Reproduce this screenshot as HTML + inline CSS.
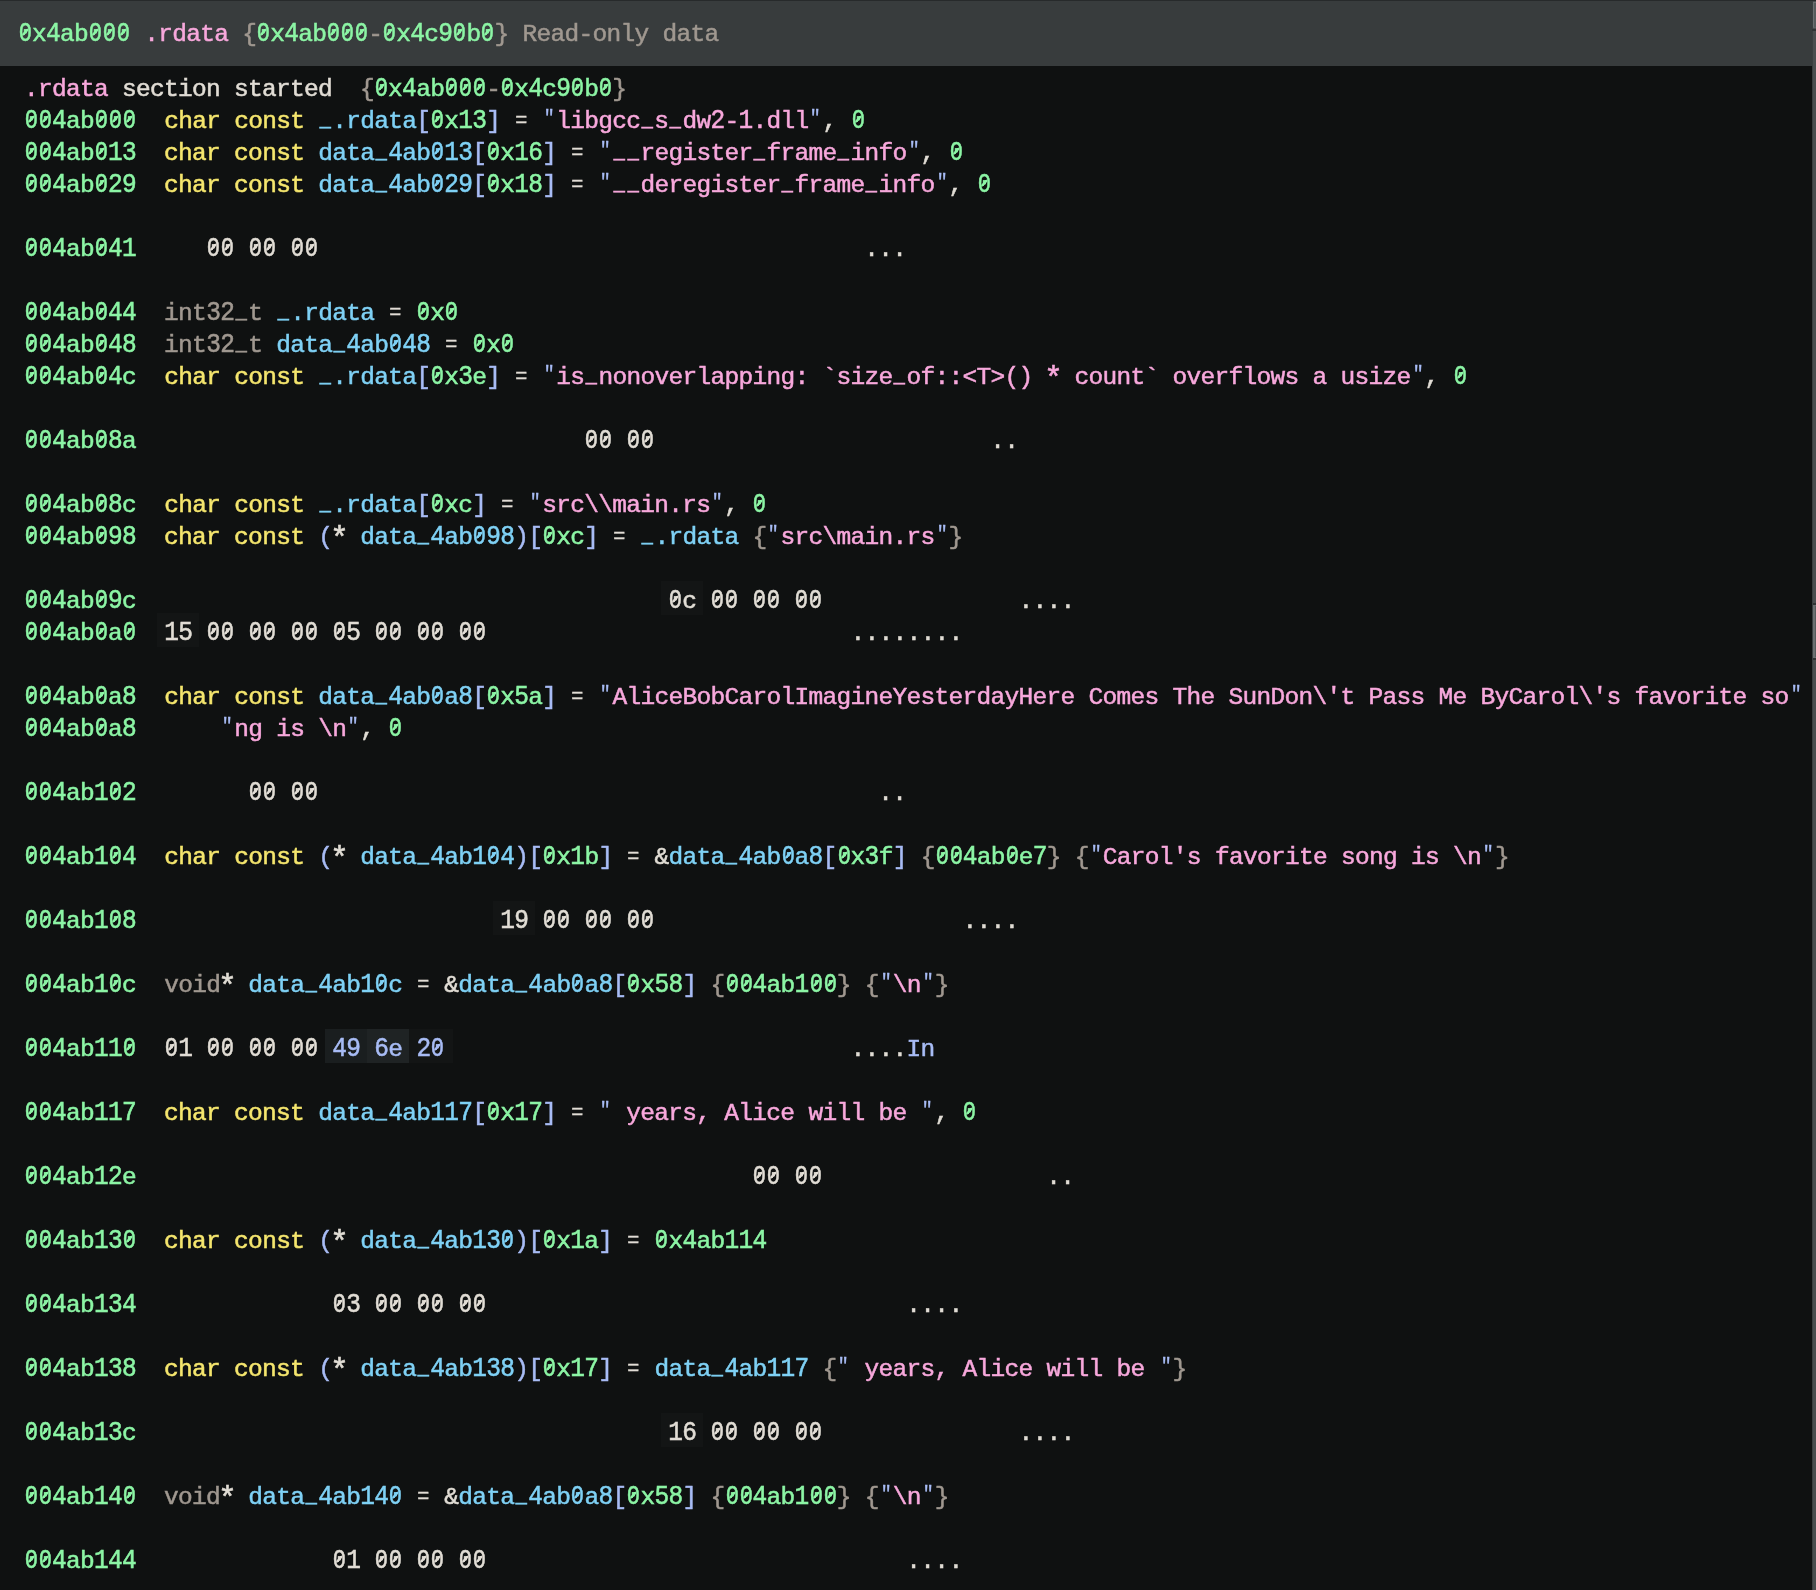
<!DOCTYPE html>
<html><head><meta charset="utf-8"><title>linear view</title><style>
html,body{margin:0;padding:0;background:#0f1111;}
body{width:1816px;height:1590px;overflow:hidden;position:relative;font-family:"Liberation Mono",monospace;font-size:24.5px;letter-spacing:-0.7px;color:#e1ddd5;-webkit-text-stroke:0.5px currentColor;font-kerning:none;font-variant-ligatures:none;}
#hdr{position:absolute;left:0;top:0;width:1812px;height:66px;background:#383c3d;}
#hdr .t{will-change:transform;position:absolute;left:18px;top:19px;height:32px;line-height:32px;white-space:pre;}
#sb{position:absolute;left:1812px;top:0;width:4px;height:1590px;background:#4a4e4f;border-left:1px solid #3b3f40;box-sizing:border-box;}
#sb .a{position:absolute;left:0;top:2px;width:3px;height:26px;background:#565b5c;border-left:1px solid #6b7071;border-top:1px solid #6b7071;border-bottom:1px solid #5d6263;box-sizing:border-box;}
#sb .s{position:absolute;left:-1px;top:29px;width:4px;height:2px;background:#2f3334;}
#sb .th{position:absolute;left:0;top:605px;width:3px;height:53px;background:#565b5c;border-left:2px solid #6b7071;border-top:1px solid #6b7071;border-bottom:1px solid #6b7071;box-sizing:border-box;box-shadow:0 -2px 0 #2f3334,0 2px 0 #2f3334;}
#top{position:absolute;left:0;top:0;width:1816px;height:1px;background:#272a2b;}
#code{will-change:transform;position:absolute;left:24px;top:74px;}
.ln{height:32px;line-height:32px;white-space:pre;}
i{font-style:normal;display:inline-block;transform:scaleY(1.11);transform-origin:0 22.5px;}
b{font-weight:normal;display:inline-block;transform:scaleX(0.9);background:linear-gradient(to bottom right,transparent calc(50% - 1.5px),currentColor calc(50% - 0.9px),currentColor calc(50% + 0.9px),transparent calc(50% + 1.5px)) 4.0px 11.2px/6.7px 6.2px no-repeat;}
u{text-decoration:none;display:inline-block;transform:translateY(-2.5px) scale(0.78,1.0);}
s{text-decoration:none;display:inline-block;transform:translateY(2.5px) scale(1.25);}
em{font-style:normal;display:inline-block;transform:scale(0.82,0.9);}
.q{color:#a8bcf5;display:inline-block;transform:scale(0.74,0.8);transform-origin:50% 3.5px;}
.g{color:#8cf5a5}.p{color:#f8a8dc}.y{color:#f5e66e}.b{color:#7fd1f5}.l{color:#a8bcf5}.k{color:#a09890}
.hb{background:var(--bg);box-shadow:-7px 0 0 var(--bg),7px 0 0 var(--bg);padding:7px 0 0;}
.hl{box-shadow:-7px 0 0 var(--bg),9px 0 0 var(--bg);}
</style></head>
<body>
<div id="hdr"><div class="t"><span class="g"><i><b>0</b></i>x<i>4</i>ab<i><b>0</b><b>0</b><b>0</b></i></span> <span class="p">.rdata</span> <span class="k">{</span><span class="g"><i><b>0</b></i>x<i>4</i>ab<i><b>0</b><b>0</b><b>0</b></i></span><span class="k">-</span><span class="g"><i><b>0</b></i>x<i>4</i>c<i>9<b>0</b></i>b<i><b>0</b></i></span><span class="k">}</span> <span class="k">Read-only data</span></div></div>
<div id="sb"><div class="a"></div><div class="s"></div><div class="th"></div></div>
<div id="top"></div>
<div id="code">
<div class="ln"><span class="p">.rdata</span> section started  <span class="k">{</span><span class="g"><i><b>0</b></i>x<i>4</i>ab<i><b>0</b><b>0</b><b>0</b></i></span><span class="k">-</span><span class="g"><i><b>0</b></i>x<i>4</i>c<i>9<b>0</b></i>b<i><b>0</b></i></span><span class="k">}</span></div>
<div class="ln"><span class="g"><i><b>0</b><b>0</b>4</i>ab<i><b>0</b><b>0</b><b>0</b></i></span>  <span class="y">char const </span><span class="b"><u>_</u>.rdata</span><span class="l">[</span><span class="g"><i><b>0</b></i>x<i>13</i></span><span class="l">]</span> <em>=</em> <span class="q">"</span><span class="p">libgcc<u>_</u>s<u>_</u>dw<i>2</i>-<i>1</i>.dll</span><span class="q">"</span>, <span class="g"><i><b>0</b></i></span></div>
<div class="ln"><span class="g"><i><b>0</b><b>0</b>4</i>ab<i><b>0</b>13</i></span>  <span class="y">char const </span><span class="b">data<u>_</u><i>4</i>ab<i><b>0</b>13</i></span><span class="l">[</span><span class="g"><i><b>0</b></i>x<i>16</i></span><span class="l">]</span> <em>=</em> <span class="q">"</span><span class="p"><u>_</u><u>_</u>register<u>_</u>frame<u>_</u>info</span><span class="q">"</span>, <span class="g"><i><b>0</b></i></span></div>
<div class="ln"><span class="g"><i><b>0</b><b>0</b>4</i>ab<i><b>0</b>29</i></span>  <span class="y">char const </span><span class="b">data<u>_</u><i>4</i>ab<i><b>0</b>29</i></span><span class="l">[</span><span class="g"><i><b>0</b></i>x<i>18</i></span><span class="l">]</span> <em>=</em> <span class="q">"</span><span class="p"><u>_</u><u>_</u>deregister<u>_</u>frame<u>_</u>info</span><span class="q">"</span>, <span class="g"><i><b>0</b></i></span></div>
<div class="ln"></div>
<div class="ln"><span class="g"><i><b>0</b><b>0</b>4</i>ab<i><b>0</b>41</i></span>     <span class="w"><i><b>0</b><b>0</b></i></span> <span class="w"><i><b>0</b><b>0</b></i></span> <span class="w"><i><b>0</b><b>0</b></i></span>                                       ...</div>
<div class="ln"></div>
<div class="ln"><span class="g"><i><b>0</b><b>0</b>4</i>ab<i><b>0</b>44</i></span>  <span class="k">int<i>32</i><u>_</u>t </span><span class="b"><u>_</u>.rdata</span> <em>=</em> <span class="g"><i><b>0</b></i>x<i><b>0</b></i></span></div>
<div class="ln"><span class="g"><i><b>0</b><b>0</b>4</i>ab<i><b>0</b>48</i></span>  <span class="k">int<i>32</i><u>_</u>t </span><span class="b">data<u>_</u><i>4</i>ab<i><b>0</b>48</i></span> <em>=</em> <span class="g"><i><b>0</b></i>x<i><b>0</b></i></span></div>
<div class="ln"><span class="g"><i><b>0</b><b>0</b>4</i>ab<i><b>0</b>4</i>c</span>  <span class="y">char const </span><span class="b"><u>_</u>.rdata</span><span class="l">[</span><span class="g"><i><b>0</b></i>x<i>3</i>e</span><span class="l">]</span> <em>=</em> <span class="q">"</span><span class="p">is<u>_</u>nonoverlapping: `size<u>_</u>of::&lt;T&gt;() <s>*</s> count` overflows a usize</span><span class="q">"</span>, <span class="g"><i><b>0</b></i></span></div>
<div class="ln"></div>
<div class="ln"><span class="g"><i><b>0</b><b>0</b>4</i>ab<i><b>0</b>8</i>a</span>                                <span class="w"><i><b>0</b><b>0</b></i></span> <span class="w"><i><b>0</b><b>0</b></i></span>                        ..</div>
<div class="ln"></div>
<div class="ln"><span class="g"><i><b>0</b><b>0</b>4</i>ab<i><b>0</b>8</i>c</span>  <span class="y">char const </span><span class="b"><u>_</u>.rdata</span><span class="l">[</span><span class="g"><i><b>0</b></i>xc</span><span class="l">]</span> <em>=</em> <span class="q">"</span><span class="p">src\\main.rs</span><span class="q">"</span>, <span class="g"><i><b>0</b></i></span></div>
<div class="ln"><span class="g"><i><b>0</b><b>0</b>4</i>ab<i><b>0</b>98</i></span>  <span class="y">char const </span><span class="l">(</span><s>*</s> <span class="b">data<u>_</u><i>4</i>ab<i><b>0</b>98</i></span><span class="l">)[</span><span class="g"><i><b>0</b></i>xc</span><span class="l">]</span> <em>=</em> <span class="b"><u>_</u>.rdata</span> <span class="k">{</span><span class="q">"</span><span class="p">src\main.rs</span><span class="q">"</span><span class="k">}</span></div>
<div class="ln"></div>
<div class="ln"><span class="g"><i><b>0</b><b>0</b>4</i>ab<i><b>0</b>9</i>c</span>                                      <span class="w hb" style="--bg:#131515"><i><b>0</b></i>c</span> <span class="w"><i><b>0</b><b>0</b></i></span> <span class="w"><i><b>0</b><b>0</b></i></span> <span class="w"><i><b>0</b><b>0</b></i></span>              ....</div>
<div class="ln"><span class="g"><i><b>0</b><b>0</b>4</i>ab<i><b>0</b></i>a<i><b>0</b></i></span>  <span class="w hb" style="--bg:#131515"><i>15</i></span> <span class="w"><i><b>0</b><b>0</b></i></span> <span class="w"><i><b>0</b><b>0</b></i></span> <span class="w"><i><b>0</b><b>0</b></i></span> <span class="w"><i><b>0</b>5</i></span> <span class="w"><i><b>0</b><b>0</b></i></span> <span class="w"><i><b>0</b><b>0</b></i></span> <span class="w"><i><b>0</b><b>0</b></i></span>                          ........</div>
<div class="ln"></div>
<div class="ln"><span class="g"><i><b>0</b><b>0</b>4</i>ab<i><b>0</b></i>a<i>8</i></span>  <span class="y">char const </span><span class="b">data<u>_</u><i>4</i>ab<i><b>0</b></i>a<i>8</i></span><span class="l">[</span><span class="g"><i><b>0</b></i>x<i>5</i>a</span><span class="l">]</span> <em>=</em> <span class="q">"</span><span class="p">AliceBobCarolImagineYesterdayHere Comes The SunDon\'t Pass Me ByCarol\'s favorite so</span><span class="q">"</span></div>
<div class="ln"><span class="g"><i><b>0</b><b>0</b>4</i>ab<i><b>0</b></i>a<i>8</i></span>      <span class="q">"</span><span class="p">ng is \n</span><span class="q">"</span>, <span class="g"><i><b>0</b></i></span></div>
<div class="ln"></div>
<div class="ln"><span class="g"><i><b>0</b><b>0</b>4</i>ab<i>1<b>0</b>2</i></span>        <span class="w"><i><b>0</b><b>0</b></i></span> <span class="w"><i><b>0</b><b>0</b></i></span>                                        ..</div>
<div class="ln"></div>
<div class="ln"><span class="g"><i><b>0</b><b>0</b>4</i>ab<i>1<b>0</b>4</i></span>  <span class="y">char const </span><span class="l">(</span><s>*</s> <span class="b">data<u>_</u><i>4</i>ab<i>1<b>0</b>4</i></span><span class="l">)[</span><span class="g"><i><b>0</b></i>x<i>1</i>b</span><span class="l">]</span> <em>=</em> &amp;<span class="b">data<u>_</u><i>4</i>ab<i><b>0</b></i>a<i>8</i></span><span class="l">[</span><span class="g"><i><b>0</b></i>x<i>3</i>f</span><span class="l">]</span> <span class="k">{</span><span class="g"><i><b>0</b><b>0</b>4</i>ab<i><b>0</b></i>e<i>7</i></span><span class="k">}</span> <span class="k">{</span><span class="q">"</span><span class="p">Carol's favorite song is \n</span><span class="q">"</span><span class="k">}</span></div>
<div class="ln"></div>
<div class="ln"><span class="g"><i><b>0</b><b>0</b>4</i>ab<i>1<b>0</b>8</i></span>                          <span class="w hb" style="--bg:#131515"><i>19</i></span> <span class="w"><i><b>0</b><b>0</b></i></span> <span class="w"><i><b>0</b><b>0</b></i></span> <span class="w"><i><b>0</b><b>0</b></i></span>                      ....</div>
<div class="ln"></div>
<div class="ln"><span class="g"><i><b>0</b><b>0</b>4</i>ab<i>1<b>0</b></i>c</span>  <span class="k">void</span><s>*</s> <span class="b">data<u>_</u><i>4</i>ab<i>1<b>0</b></i>c</span> <em>=</em> &amp;<span class="b">data<u>_</u><i>4</i>ab<i><b>0</b></i>a<i>8</i></span><span class="l">[</span><span class="g"><i><b>0</b></i>x<i>58</i></span><span class="l">]</span> <span class="k">{</span><span class="g"><i><b>0</b><b>0</b>4</i>ab<i>1<b>0</b><b>0</b></i></span><span class="k">}</span> <span class="k">{</span><span class="q">"</span><span class="p">\n</span><span class="q">"</span><span class="k">}</span></div>
<div class="ln"></div>
<div class="ln"><span class="g"><i><b>0</b><b>0</b>4</i>ab<i>11<b>0</b></i></span>  <span class="w"><i><b>0</b>1</i></span> <span class="w"><i><b>0</b><b>0</b></i></span> <span class="w"><i><b>0</b><b>0</b></i></span> <span class="w"><i><b>0</b><b>0</b></i></span> <span class="l hb" style="--bg:#1a1e1f"><i>49</i></span> <span class="l hb" style="--bg:#1f2324"><i>6</i>e</span> <span class="l hb hl" style="--bg:#131515"><i>2<b>0</b></i></span>                             ....<span class="l">In </span></div>
<div class="ln"></div>
<div class="ln"><span class="g"><i><b>0</b><b>0</b>4</i>ab<i>117</i></span>  <span class="y">char const </span><span class="b">data<u>_</u><i>4</i>ab<i>117</i></span><span class="l">[</span><span class="g"><i><b>0</b></i>x<i>17</i></span><span class="l">]</span> <em>=</em> <span class="q">"</span><span class="p"> years, Alice will be </span><span class="q">"</span>, <span class="g"><i><b>0</b></i></span></div>
<div class="ln"></div>
<div class="ln"><span class="g"><i><b>0</b><b>0</b>4</i>ab<i>12</i>e</span>                                            <span class="w"><i><b>0</b><b>0</b></i></span> <span class="w"><i><b>0</b><b>0</b></i></span>                ..</div>
<div class="ln"></div>
<div class="ln"><span class="g"><i><b>0</b><b>0</b>4</i>ab<i>13<b>0</b></i></span>  <span class="y">char const </span><span class="l">(</span><s>*</s> <span class="b">data<u>_</u><i>4</i>ab<i>13<b>0</b></i></span><span class="l">)[</span><span class="g"><i><b>0</b></i>x<i>1</i>a</span><span class="l">]</span> <em>=</em> <span class="g"><i><b>0</b></i>x<i>4</i>ab<i>114</i></span></div>
<div class="ln"></div>
<div class="ln"><span class="g"><i><b>0</b><b>0</b>4</i>ab<i>134</i></span>              <span class="w"><i><b>0</b>3</i></span> <span class="w"><i><b>0</b><b>0</b></i></span> <span class="w"><i><b>0</b><b>0</b></i></span> <span class="w"><i><b>0</b><b>0</b></i></span>                              ....</div>
<div class="ln"></div>
<div class="ln"><span class="g"><i><b>0</b><b>0</b>4</i>ab<i>138</i></span>  <span class="y">char const </span><span class="l">(</span><s>*</s> <span class="b">data<u>_</u><i>4</i>ab<i>138</i></span><span class="l">)[</span><span class="g"><i><b>0</b></i>x<i>17</i></span><span class="l">]</span> <em>=</em> <span class="b">data<u>_</u><i>4</i>ab<i>117</i></span> <span class="k">{</span><span class="q">"</span><span class="p"> years, Alice will be </span><span class="q">"</span><span class="k">}</span></div>
<div class="ln"></div>
<div class="ln"><span class="g"><i><b>0</b><b>0</b>4</i>ab<i>13</i>c</span>                                      <span class="w hb" style="--bg:#131515"><i>16</i></span> <span class="w"><i><b>0</b><b>0</b></i></span> <span class="w"><i><b>0</b><b>0</b></i></span> <span class="w"><i><b>0</b><b>0</b></i></span>              ....</div>
<div class="ln"></div>
<div class="ln"><span class="g"><i><b>0</b><b>0</b>4</i>ab<i>14<b>0</b></i></span>  <span class="k">void</span><s>*</s> <span class="b">data<u>_</u><i>4</i>ab<i>14<b>0</b></i></span> <em>=</em> &amp;<span class="b">data<u>_</u><i>4</i>ab<i><b>0</b></i>a<i>8</i></span><span class="l">[</span><span class="g"><i><b>0</b></i>x<i>58</i></span><span class="l">]</span> <span class="k">{</span><span class="g"><i><b>0</b><b>0</b>4</i>ab<i>1<b>0</b><b>0</b></i></span><span class="k">}</span> <span class="k">{</span><span class="q">"</span><span class="p">\n</span><span class="q">"</span><span class="k">}</span></div>
<div class="ln"></div>
<div class="ln"><span class="g"><i><b>0</b><b>0</b>4</i>ab<i>144</i></span>              <span class="w"><i><b>0</b>1</i></span> <span class="w"><i><b>0</b><b>0</b></i></span> <span class="w"><i><b>0</b><b>0</b></i></span> <span class="w"><i><b>0</b><b>0</b></i></span>                              ....</div>
</div>
</body></html>
